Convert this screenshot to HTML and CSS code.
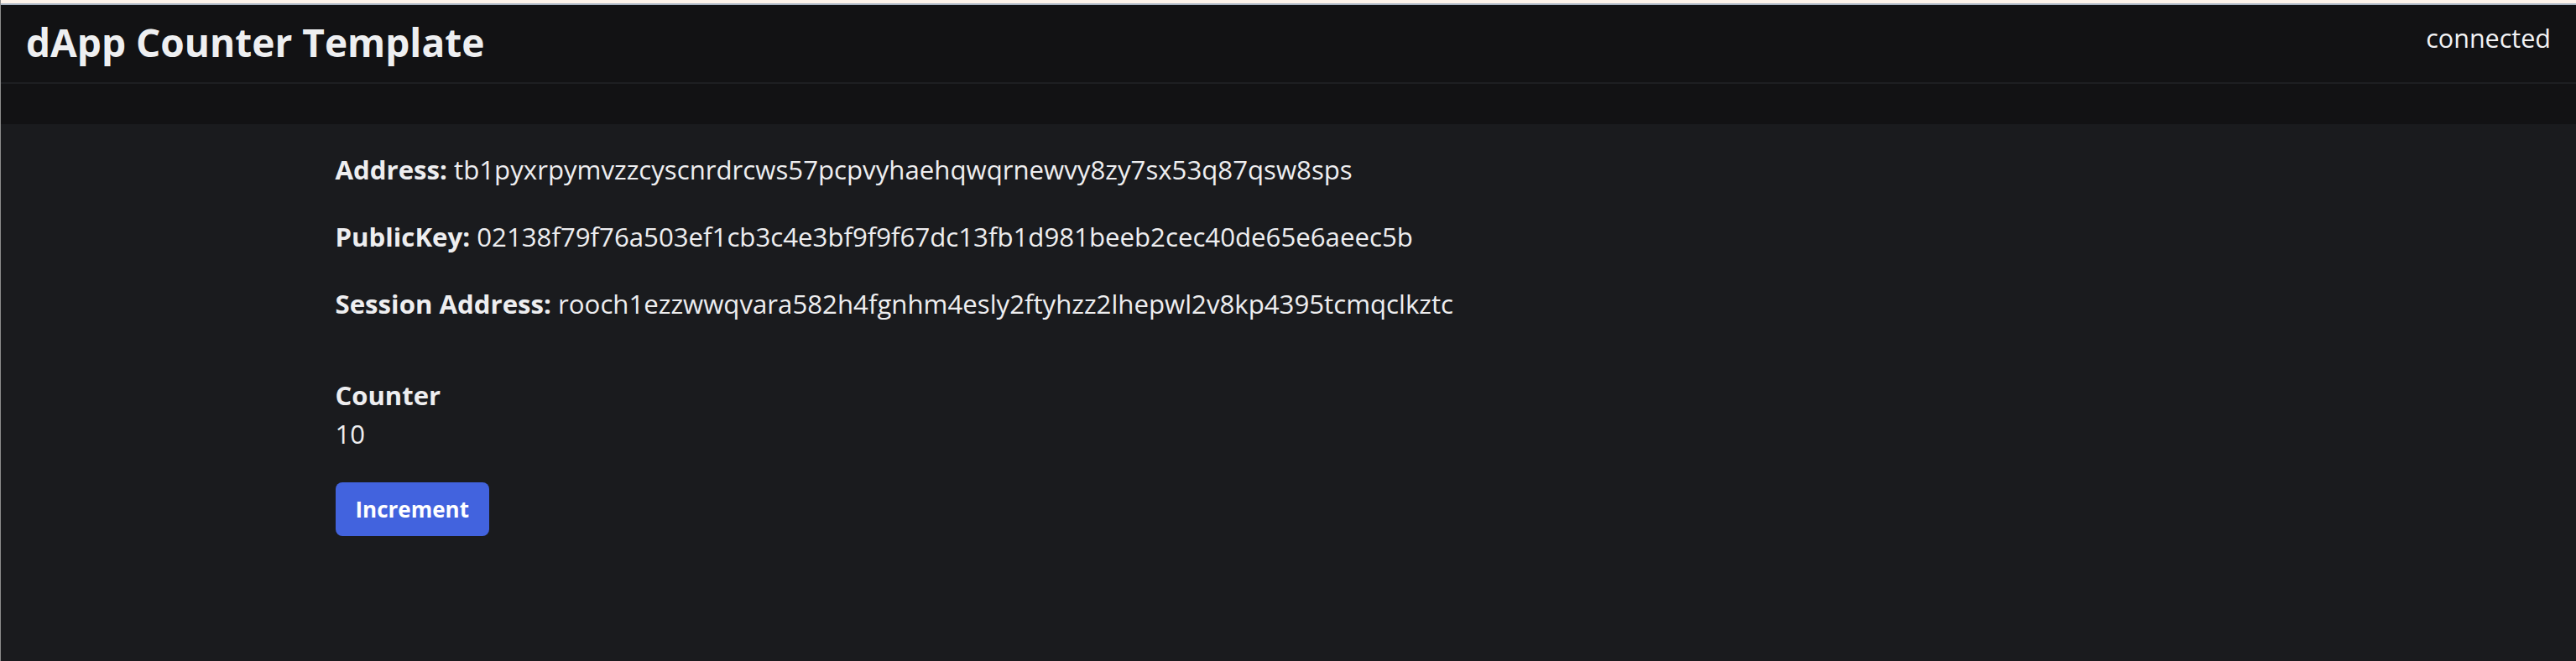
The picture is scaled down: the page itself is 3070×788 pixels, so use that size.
FILE: index.html
```html
<!DOCTYPE html>
<html lang="en">
<head>
<meta charset="utf-8">
<title>dApp Counter Template</title>
<link rel="stylesheet" href="styles.css">
</head>
<body>
  <div class="window">
    <div class="chrome"></div>
    <header class="header">
      <h1 class="title">dApp Counter Template</h1>
      <div class="status">connected</div>
    </header>
    <div class="subbar"></div>
    <main class="main">
      <div class="container">
        <p class="row"><span class="label">Address:</span> tb1pyxrpymvzzcyscnrdrcws57pcpvyhaehqwqrnewvy8zy7sx53q87qsw8sps</p>
        <p class="row"><span class="label">PublicKey:</span> 02138f79f76a503ef1cb3c4e3bf9f9f67dc13fb1d981beeb2cec40de65e6aeec5b</p>
        <p class="row"><span class="label">Session Address:</span> rooch1ezzwwqvara582h4fgnhm4esly2ftyhzz2lhepwl2v8kp4395tcmqclkztc</p>
        <section class="counter">
          <div class="counter-label">Counter</div>
          <div class="counter-value">10</div>
          <button class="btn" type="button">Increment</button>
        </section>
      </div>
    </main>
  </div>
</body>
</html>
```
FILE: styles.css
```css
* { box-sizing: border-box; }
html, body {
  margin: 0;
  padding: 0;
  height: 100%;
  background: #1a1b1e;
}
body {
  font-family: "Open Sans", "Noto Sans", "Liberation Sans", sans-serif;
  color: #eeeef0;
  overflow: hidden;
}
.window {
  height: 100vh;
  border-left: 1px solid #8c8c8c;
  background: #1a1b1e;
  display: flex;
  flex-direction: column;
  overflow: hidden;
}
.chrome {
  flex: none;
  height: 6px;
  background: #fdf3ea;
  border-bottom: 2px solid #a9b5c4;
}
.header {
  flex: none;
  height: 94px;
  background: #121214;
  border-bottom: 2px solid #1e1f22;
  display: flex;
  justify-content: space-between;
  align-items: flex-start;
  padding: 14px 30px 0 30px;
}
.title {
  margin: 0;
  font-size: 46px;
  font-weight: 700;
  line-height: 60px;
  color: #eeeff1;
}
.status {
  font-size: 30.5px;
  line-height: 48px;
  margin-top: 1px;
  color: #f2f2f4;
}
.subbar {
  flex: none;
  height: 48px;
  background: #121214;
}
.main {
  flex: 1;
  padding-top: 30px;
}
.container {
  max-width: 2272px;
  margin: 0 auto;
}
.row {
  margin: 0 0 32px 0;
  font-size: 31.2px;
  line-height: 48px;
}
.label {
  font-weight: 700;
}
.counter {
  margin-top: 62px;
  display: flex;
  flex-direction: column;
  align-items: flex-start;
}
.counter-label {
  font-size: 31px;
  font-weight: 700;
  line-height: 46px;
}
.counter-value {
  font-size: 31px;
  line-height: 46px;
}
.btn {
  margin-top: 35px;
  height: 64px;
  padding: 0 24px;
  border: none;
  border-radius: 8px;
  background: #4263de;
  color: #ffffff;
  font-family: inherit;
  font-size: 26px;
  font-weight: 700;
  cursor: pointer;
}
```
